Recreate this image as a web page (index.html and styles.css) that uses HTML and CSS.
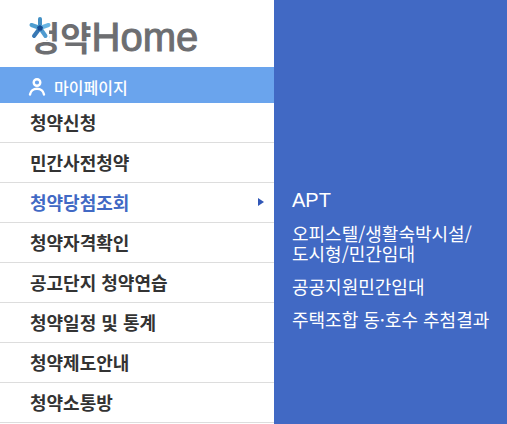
FILE: index.html
```html
<!DOCTYPE html>
<html lang="ko">
<head>
<meta charset="utf-8">
<meta name="viewport" content="width=device-width, initial-scale=1">
<title>청약Home</title>
<link rel="stylesheet" href="styles.css">
</head>
<body>
<div class="layout">
  <div class="sidebar">
    <header class="brand">
      <a class="logo" href="#">
        <svg class="logo-star" viewBox="0 0 25 28" aria-hidden="true">
          <path class="star-ground" d="M0 0H21V24H7V28H0Z"/>
          <g class="star-arms">
            <path stroke="#4390c5" d="M12 12V3"/>
            <path stroke="#68b5e4" d="M12 12L20.500 9"/>
            <path stroke="#4f9bd0" d="M12 12L17.500 20"/>
            <path stroke="#3979b4" d="M12 12L6 20"/>
            <path stroke="#4f9ed0" d="M12 12L3.500 9"/>
          </g>
          <path fill="#164c93" d="M12 9L15 11L14 14.500H10L9 11Z"/>
        </svg>
        <span class="logo-ko">청약</span><span class="logo-en">Home</span>
      </a>
    </header>
    <a class="mypage" href="#">
      <svg class="person" viewBox="0 0 18 18" aria-hidden="true">
        <circle cx="9" cy="4.500" r="3.300"/>
        <path d="M2 16.500C3 8.800 15 8.800 16 16.500"/>
      </svg>
      <span>마이페이지</span>
    </a>
    <nav aria-label="주메뉴">
      <ul class="menu">
        <li><a href="#">청약신청</a></li>
        <li><a href="#">민간사전청약</a></li>
        <li><a class="active" href="#" aria-current="true">청약당첨조회</a></li>
        <li><a href="#">청약자격확인</a></li>
        <li><a href="#">공고단지 청약연습</a></li>
        <li><a href="#">청약일정 및 통계</a></li>
        <li><a href="#">청약제도안내</a></li>
        <li><a href="#">청약소통방</a></li>
      </ul>
    </nav>
  </div>
  <nav class="panel" aria-label="청약당첨조회">
    <ul class="submenu">
      <li><a class="latin" href="#">APT</a></li>
      <li><a href="#">오피스텔/생활숙박시설/<br>도시형/민간임대</a></li>
      <li><a href="#">공공지원민간임대</a></li>
      <li><a href="#">주택조합 동·호수 추첨결과</a></li>
    </ul>
  </nav>
</div>
</body>
</html>
```
FILE: styles.css
```css
* {
  box-sizing: border-box;
}

body {
  margin: 0;
  background: #fff;
  color: #333;
  font-family: "Noto Sans CJK KR", "Noto Sans", sans-serif;
  font-size: 18px;
}

a {
  color: inherit;
  text-decoration: none;
}

ul {
  margin: 0;
  padding: 0;
  list-style: none;
}

.layout {
  display: grid;
  grid-template-columns: 274px 1fr;
  min-height: 100vh;
}

.brand {
  padding: 17px 28px 10px;
}

.logo {
  position: relative;
  display: flex;
  align-items: baseline;
  height: 40px;
  line-height: 40px;
  color: #6d6e71;
  white-space: nowrap;
}

.logo-star {
  position: absolute;
  top: -1px;
  left: 0;
  width: 25px;
  height: 28px;
}

.star-ground {
  fill: #fff;
}

.star-arms {
  fill: none;
  stroke-width: 4;
  stroke-linecap: round;
}

.logo-ko {
  padding-left: 1px;
  font-size: 34px;
  font-weight: 700;
}

.logo-en {
  font-family: "Liberation Sans", Arial, sans-serif;
  font-size: 40px;
  -webkit-text-stroke: 1px #6d6e71;
}

.mypage {
  display: flex;
  align-items: center;
  gap: 8px;
  height: 36px;
  padding: 4px 28px 0;
  background: #6aa4ed;
  color: #fff;
  font-size: 16px;
  font-weight: 500;
}

.person {
  width: 18px;
  height: 18px;
  fill: none;
  stroke: #fff;
  stroke-width: 2.4;
  stroke-linecap: round;
}

.menu a {
  display: flex;
  align-items: center;
  justify-content: space-between;
  height: 40px;
  padding: 0 10px 2px 30px;
  border-bottom: 1px solid #ddd;
  font-weight: 700;
}

.menu .active {
  color: #4169c4;
}

.active::after {
  content: "";
  border-top: 4px solid transparent;
  border-bottom: 4px solid transparent;
  border-left: 6px solid #3157b7;
}

.panel {
  padding: 190px 10px 20px 18px;
  background: #4169c4;
  color: #fff;
  line-height: 20px;
}

.submenu {
  display: grid;
  gap: 13px;
}

.submenu a {
  display: block;
}

.submenu .latin {
  font-family: "Liberation Sans", Arial, sans-serif;
  font-size: 20px;
}
```
